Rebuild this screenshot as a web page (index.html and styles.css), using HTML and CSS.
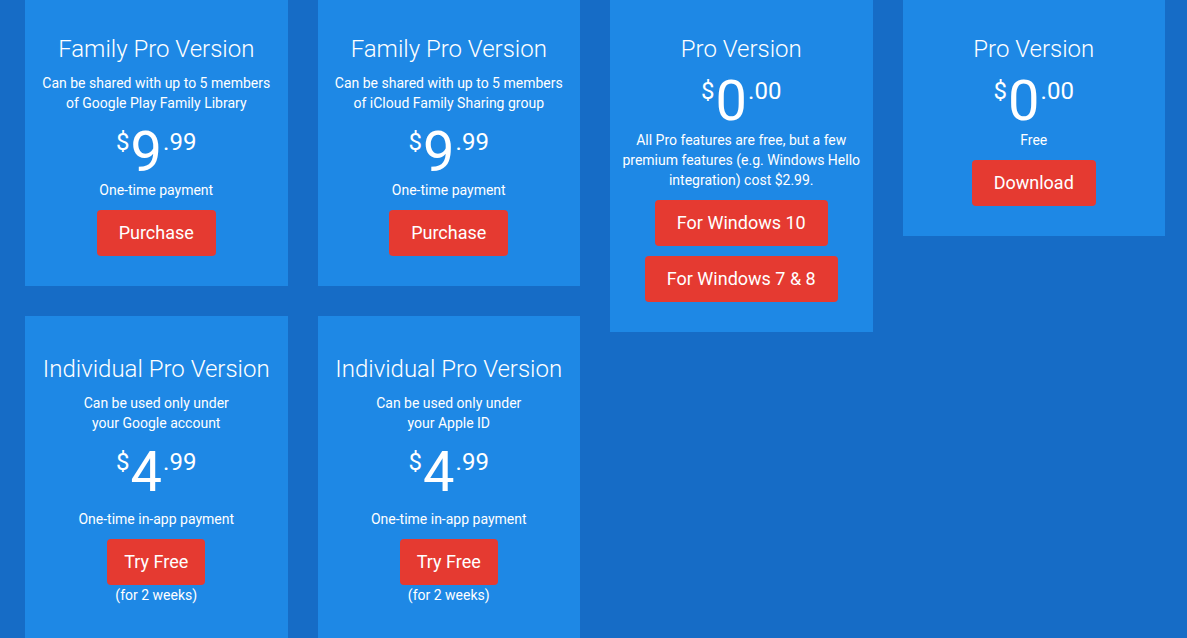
FILE: index.html
```html
<!DOCTYPE html>
<html lang="en">

<head>
    <meta charset="UTF-8">
    <meta name="viewport" content="width=device-width, initial-scale=1.0">
    <title>Pricing</title>
    <link rel="stylesheet" href="styles.css">
</head>

<body>
    <div class="pricing">
        <!-- 第一列 -->
        <div class="column">
            <div class="card">
                <h3 class="card-title">Family Pro Version</h3>
                <p class="card-desc">Can be shared with up to 5 members<br>of Google Play Family Library</p>
                <div class="price"><span class="price-sign">$</span><span class="price-whole">9</span><span class="price-cents">.99</span></div>
                <p class="card-note">One-time payment</p>
                <a class="btn" href="javascript:;">Purchase</a>
            </div>
            <div class="card card-individual">
                <h3 class="card-title">Individual Pro Version</h3>
                <p class="card-desc">Can be used only under<br>your Google account</p>
                <div class="price"><span class="price-sign">$</span><span class="price-whole">4</span><span class="price-cents">.99</span></div>
                <p class="card-note">One-time in-app payment</p>
                <a class="btn btn-try" href="javascript:;">Try Free</a>
                <p class="card-foot">(for 2 weeks)</p>
            </div>
        </div>

        <!-- 第二列 -->
        <div class="column">
            <div class="card">
                <h3 class="card-title">Family Pro Version</h3>
                <p class="card-desc">Can be shared with up to 5 members<br>of iCloud Family Sharing group</p>
                <div class="price"><span class="price-sign">$</span><span class="price-whole">9</span><span class="price-cents">.99</span></div>
                <p class="card-note">One-time payment</p>
                <a class="btn" href="javascript:;">Purchase</a>
            </div>
            <div class="card card-individual">
                <h3 class="card-title">Individual Pro Version</h3>
                <p class="card-desc">Can be used only under<br>your Apple ID</p>
                <div class="price"><span class="price-sign">$</span><span class="price-whole">4</span><span class="price-cents">.99</span></div>
                <p class="card-note">One-time in-app payment</p>
                <a class="btn btn-try" href="javascript:;">Try Free</a>
                <p class="card-foot">(for 2 weeks)</p>
            </div>
        </div>

        <!-- 第三列 -->
        <div class="column">
            <div class="card card-free">
                <h3 class="card-title">Pro Version</h3>
                <div class="price"><span class="price-sign">$</span><span class="price-whole">0</span><span class="price-cents">.00</span></div>
                <p class="card-note">All Pro features are free, but a few<br>premium features (e.g. Windows Hello<br>integration) cost $2.99.</p>
                <a class="btn" href="javascript:;">For Windows 10</a>
                <a class="btn" href="javascript:;">For Windows 7 &amp; 8</a>
            </div>
        </div>

        <!-- 第四列 -->
        <div class="column">
            <div class="card card-free">
                <h3 class="card-title">Pro Version</h3>
                <div class="price"><span class="price-sign">$</span><span class="price-whole">0</span><span class="price-cents">.00</span></div>
                <p class="card-note">Free</p>
                <a class="btn" href="javascript:;">Download</a>
            </div>
        </div>
    </div>
</body>

</html>
```

FILE: styles.css
```css
* {
    margin: 0;
    padding: 0;
    box-sizing: border-box;
}

html,
body {
    height: 100%;
    overflow: hidden;
}

body {
    background-color: #166cc6;
    color: #fff;
    font-family: Roboto, "Liberation Sans", sans-serif;
}

/* 四列布局 */
.pricing {
    display: grid;
    grid-template-columns: repeat(4, 262.5px);
    column-gap: 30px;
    align-items: start;
    margin-top: -4px;
    padding-left: 25px;
}

.column {
    display: flex;
    flex-direction: column;
    gap: 30px;
}

/* 卡片 */
.card {
    display: flex;
    flex-direction: column;
    align-items: center;
    text-align: center;
    padding: 38px 10px 30px;
    background-color: #1e88e5;
}

.card-title {
    font-size: 24px;
    line-height: 30px;
    font-weight: 300;
    margin-bottom: 9px;
}

.card-desc {
    font-size: 14px;
    line-height: 20px;
    margin-bottom: 11px;
}

/* 价格 */
.price {
    display: flex;
    align-items: flex-start;
    justify-content: center;
    height: 56px;
    line-height: 1;
}

.price-whole {
    font-size: 56px;
    font-weight: 400;
    margin: 0 1px;
}

.price-sign,
.price-cents {
    font-size: 24px;
    margin-top: 6px;
}

.card-note,
.card-foot {
    font-size: 14px;
    line-height: 20px;
}

.card-free .card-note {
    margin-top: 1px;
}

.card-individual .card-note {
    margin-top: 9px;
}

.card-individual {
    padding-bottom: 50px;
}

/* 按钮 */
.btn {
    display: inline-block;
    margin-top: 10px;
    padding: 12px 22px;
    font-size: 18px;
    line-height: 22px;
    color: #fff;
    text-decoration: none;
    background-color: #e53a31;
    border-radius: 4px;
}

.btn-try {
    padding: 12px 17px;
}

.btn:hover {
    background-color: #d32f2f;
}
```
